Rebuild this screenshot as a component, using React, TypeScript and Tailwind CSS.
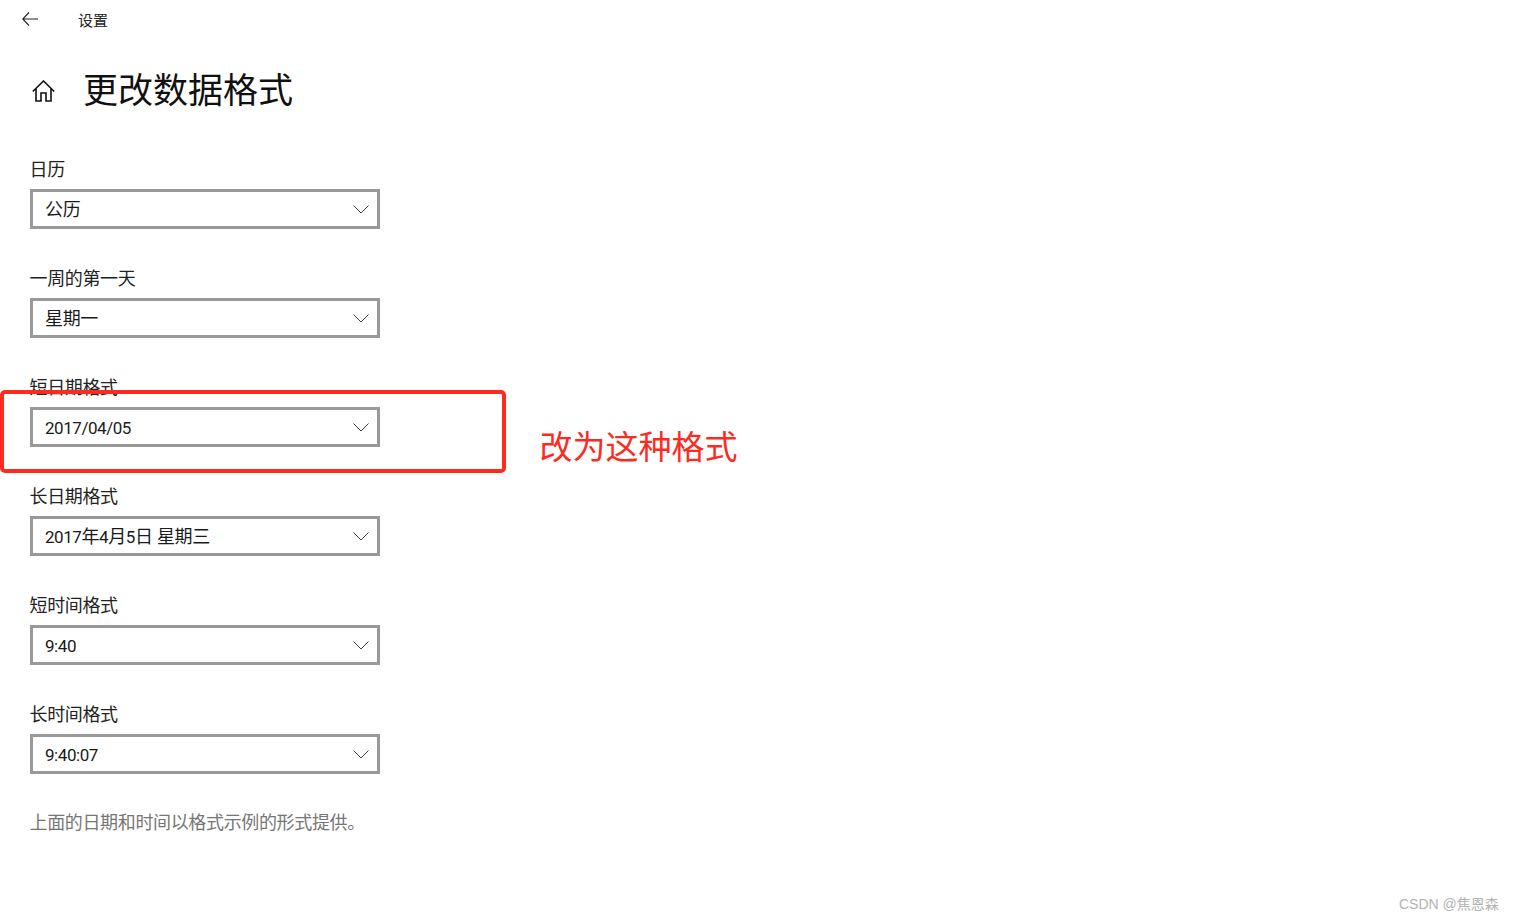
const fields = [
  { label: "日历", value: "公历" },
  { label: "一周的第一天", value: "星期一" },
  { label: "短日期格式", value: "2017/04/05" },
  { label: "长日期格式", value: "2017年4月5日 星期三" },
  { label: "短时间格式", value: "9:40" },
  { label: "长时间格式", value: "9:40:07" },
];

// digits are narrower than the CJK face's latin, so they get their own span
const Value = ({ text }: { text: string }) => (
  <span className="pt-[1px] text-[18px] tracking-[-0.35px] text-[#1a1a1a]">
    {text.split(/([0-9/:]+)/).map((part, i) =>
      /[0-9]/.test(part) ? (
        <span key={i} className="font-['Roboto',sans-serif] text-[17px] tracking-[-0.45px]">
          {part}
        </span>
      ) : (
        <span key={i}>{part}</span>
      ),
    )}
  </span>
);

const Field = ({ label, value }: { label: string; value: string }) => (
  <div className="h-[109px]">
    <div className="-ml-[0.5px] h-[40px] pt-[7.5px] text-[18px] leading-[25px] tracking-[-0.35px] text-[#222]">{label}</div>
    <div className="flex h-[40px] w-[350px] items-center justify-between border-[3px] border-[#999] pl-3 pr-[8px]">
      <Value text={value} />
      <svg width="16" height="9" viewBox="0 0 16 9" fill="none" stroke="#444" strokeWidth="1">
        <path d="M0.5 0.5 L8 8 L15.5 0.5" />
      </svg>
    </div>
  </div>
);

export default function App() {
  return (
    <div className="relative h-[921px] w-[1514px] overflow-hidden bg-white font-['Noto_Sans','Noto_Sans_CJK_SC',sans-serif]">
      {/* top bar */}
      <div className="flex h-[40px] items-center pl-[22px]">
        <svg width="16" height="14" viewBox="0 0 16 14" fill="none" stroke="#222" strokeWidth="1.1" className="-translate-y-[1px]">
          <path d="M16 7 H1 M7 0.5 L0.8 7 L7 13.5" />
        </svg>
        <span className="ml-10 text-[15px] text-[#222]">设置</span>
      </div>

      {/* title */}
      <div className="mt-[8px] flex h-[84px] items-center pl-[32px]">
        <svg width="23" height="22" viewBox="0 0 23 22" fill="none" stroke="#111" strokeWidth="1.6" className="translate-y-[1px]">
          <path d="M0.8 11.5 L11.5 1 L22.2 11.5" />
          <path d="M4 8.5 V21 H9 V13 H14 V21 H19 V8.5" />
        </svg>
        <h1 className="ml-[28px] -translate-y-[1px] text-[35px] font-normal leading-none text-[#111]">更改数据格式</h1>
      </div>

      <div className="pl-[30px] pt-[17px]">
        {fields.map((f) => (
          <Field key={f.label} label={f.label} value={f.value} />
        ))}
        <p className="-ml-[0.5px] pt-[7px] text-[18px] leading-[25px] tracking-[-0.35px] text-[#767676]">
          上面的日期和时间以格式示例的形式提供。
        </p>
      </div>

      {/* annotation on top of the screenshot */}
      <div className="absolute left-0 top-[390px] h-[83px] w-[506px] rounded-[5px] border-4 border-[#ff2a1f]" />
      <div className="absolute left-[539.5px] top-[425px] text-[33px] leading-[44px] text-[#ff2a1f]">改为这种格式</div>

      <div className="absolute left-[1399px] top-[894px] font-['Liberation_Sans','Noto_Sans_CJK_SC',sans-serif] text-[14px] leading-[20px] text-[#b3b3b3]">
        CSDN @焦恩森
      </div>
    </div>
  );
}
